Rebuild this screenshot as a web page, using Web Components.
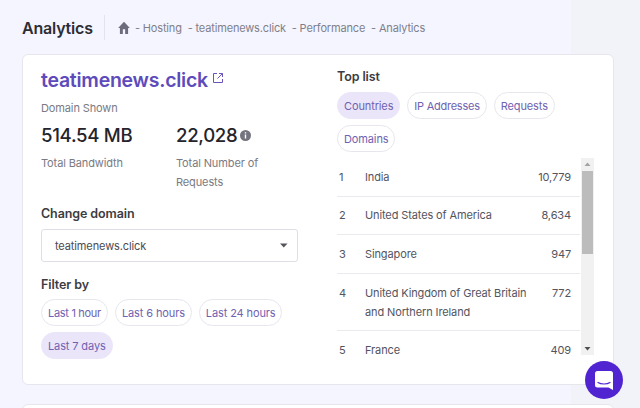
<!DOCTYPE html>
<html><head><meta charset="utf-8">
<style>
html,body{margin:0;padding:0;height:408px;overflow:hidden}
body{font-family:Inter,"Liberation Sans",sans-serif;color:#2d2d33}
</style></head><body>
<template id="t-chip"><style>
:host{display:inline-flex;align-items:center;height:27px;box-sizing:border-box;padding:0 6px;border:1px solid #e6e6ee;border-radius:14px;font-size:11px;letter-spacing:-.12px;color:#6f62b0;background:#fff;white-space:nowrap}
:host([active]){background:#ebe5fa;border-color:#ebe5fa}
</style><slot></slot></template>

<template id="t-row"><style>
:host{display:grid;grid-template-columns:26px 1fr auto;padding:9.800px 9px 8.800px 2px;font-size:11px;line-height:19px;letter-spacing:-.12px;color:#54545e;border-bottom:1px solid #e9e9ee}
:host(:last-child){border-bottom:0;padding-bottom:0}
.n{padding-right:8px}
.v{padding-left:14px}
</style><span><slot name="rank"></slot></span><span class="n"><slot name="name"></slot></span><span class="v"><slot name="value"></slot></span></template>

<template id="t-list"><style>
:host{display:flex;align-items:flex-start;height:197px}
.rows{flex:1;min-width:0}
.bar{width:13px;height:197px;margin-left:1px;background:#f1f1f1;display:flex;flex-direction:column;align-items:center}
.bar svg{display:block;flex:none}
.thumb{width:11px;height:83px;background:#bcbcbc;flex:none}
.sp{flex:1}
</style><div class="rows"><slot></slot></div><div class="bar"><svg width="13" height="13" viewBox="0 0 13 13"><path d="M6.500 4.500 9.500 8h-6z" fill="#a3a3a3"/></svg><div class="thumb"></div><div class="sp"></div><svg width="13" height="13" viewBox="0 0 13 13"><path d="M3.500 5h6l-3 3.500z" fill="#505050"/></svg></div></template>

<template id="t-stat"><style>
:host{display:block}
.v{display:flex;align-items:center;font-size:18.600px;font-weight:500;line-height:24px;letter-spacing:-.3px;color:#24242a}
.l{margin-top:7px;font-size:11px;line-height:19px;letter-spacing:-.12px;color:#7a7a83}
</style><div class="v"><slot name="value"></slot></div><div class="l"><slot name="label"></slot></div></template>

<template id="t-select"><style>
:host{display:flex;align-items:center;justify-content:space-between;height:33px;box-sizing:border-box;padding:0 9px 0 13px;border:1px solid #dedee6;border-radius:3px;font-size:11px;letter-spacing:-.12px;color:#4a4a52;background:#fff}
svg{display:block}
</style><span><slot></slot></span><svg width="8" height="5" viewBox="0 0 8 5"><path d="M0 .5h7.500L3.800 4.500z" fill="#55555c"/></svg></template>

<template id="t-head"><style>
:host{display:flex;align-items:center;height:54px;box-sizing:border-box;padding:1px 0 0 22px}
h1{margin:0;font-size:16px;font-weight:600;letter-spacing:-.2px;color:#2d2d33;width:82px}
.d{width:1px;height:25px;background:#e3e3ec;margin-right:12px}
nav{display:flex;align-items:center;font-size:11px;letter-spacing:-.16px;color:#7f7f8b;white-space:pre}
svg{display:block;margin-right:4px}
</style><h1><slot name="title"></slot></h1><div class="d"></div><nav><svg width="14" height="13" viewBox="0 0 24 22"><path d="M10 22v-8h4v8h5v-10h3L12 1 2 12h3v10z" fill="#6c6c7d"/></svg><slot></slot></nav></template>

<template id="t-card"><style>
:host{display:grid;grid-template-columns:296px 1fr;width:592px;height:331px;box-sizing:border-box;margin-left:22px;padding:14px 19px 0 18px;border:1px solid #e6e6ec;border-radius:6px;background:#fff}
</style><slot></slot></template>

<template id="t-app"><style>
:host{display:block;position:relative;width:640px;height:408px;overflow:hidden;background:linear-gradient(to right,#f4f5ff 571px,#f2f3f8 571px)}
.next{width:592px;height:40px;box-sizing:border-box;margin:19px 0 0 22px;border:1px solid #e6e6ec;border-radius:6px;background:#fff}
.chat{position:absolute;left:585px;top:361px;width:38px;height:38px;border-radius:50%;background:#5025d1;display:flex;align-items:center;justify-content:center}
svg{display:block}
</style><slot name="head"></slot><slot name="card"></slot><div class="next"></div><div class="chat"><svg width="18" height="19" viewBox="0 0 18 19"><path d="M2.500 0h13A2.500 2.500 0 0 1 18 2.500V19l-4.500-2.500h-11A2.500 2.500 0 0 1 0 14V2.500A2.500 2.500 0 0 1 2.500 0z" fill="#fff"/><path d="M3 11.500c3 2 9 2 12 0" fill="none" stroke="#5025d1" stroke-width="1.200" stroke-linecap="round"/></svg></div></template>

<template id="t-left"><style>
:host{display:block;width:257px}
.dom{display:flex;align-items:flex-start;gap:4px;font-size:19.500px;font-weight:600;line-height:22px;letter-spacing:-.25px;color:#5e4bbb}
.dom svg{display:block;margin-top:3px}
.sub{margin-top:9px;font-size:11px;line-height:16px;letter-spacing:-.12px;color:#7a7a83}
.stats{display:grid;grid-template-columns:135px 1fr;margin-top:7px}
h3{margin:0;font-size:12.500px;font-weight:600;line-height:16px;letter-spacing:-.1px;color:#3c3c42}
.cd{margin-top:14px}
.sel{margin-top:7px}
.fb{margin-top:15px}
.chips{display:flex;flex-wrap:wrap;gap:6px 7px;margin-top:6px}
</style><div class="dom"><slot name="domain"></slot><svg width="12" height="12" viewBox="0 0 12 12" fill="none" stroke="#6a55bd" stroke-width="1"><path d="M5 1.500H1.500v9h9V7M7 1.500h3.500V5M10.500 1.500 5.500 6.500"/></svg></div><div class="sub"><slot name="sub"></slot></div><div class="stats"><slot name="stats"></slot></div><h3 class="cd"><slot name="cd"></slot></h3><div class="sel"><slot name="sel"></slot></div><h3 class="fb"><slot name="fb"></slot></h3><div class="chips"><slot name="chips"></slot></div></template>

<template id="t-right"><style>
:host{display:block}
h3{margin:0;font-size:12.500px;font-weight:600;line-height:16px;letter-spacing:-.1px;color:#3c3c42}
.chips{display:flex;flex-wrap:wrap;gap:6px 7px;margin-top:7px}
.list{margin-top:6px}
</style><h3><slot name="title"></slot></h3><div class="chips"><slot name="chips"></slot></div><div class="list"><slot name="list"></slot></div></template>

<script>
for (const n of ['chip','row','list','stat','select','head','card','app','left','right']) {
  customElements.define('x-'+n, class extends HTMLElement {
    constructor(){ super(); this.attachShadow({mode:'open'}).appendChild(document.getElementById('t-'+n).content.cloneNode(true)); }
  });
}
</script>

<x-app>
  <x-head slot="head"><span slot="title">Analytics</span>- Hosting  - teatimenews.click  - Performance  - Analytics</x-head>
  <x-card slot="card">
    <x-left>
      <span slot="domain">teatimenews.click</span>
      <span slot="sub">Domain Shown</span>
      <x-stat slot="stats"><span slot="value">514.54 MB</span><span slot="label">Total Bandwidth</span></x-stat>
      <x-stat slot="stats"><span slot="value" style="display:inline-flex;align-items:center">22,028<svg width="11" height="11" viewBox="0 0 11 11" style="display:block;margin-left:3px"><circle cx="5.500" cy="5.500" r="5.500" fill="#74747f"/><path d="M4.800 4.600h1.400v4H4.800zM4.800 2.300h1.400v1.300H4.800z" fill="#fff"/></svg></span><span slot="label">Total Number of Requests</span></x-stat>
      <span slot="cd">Change domain</span>
      <x-select slot="sel">teatimenews.click</x-select>
      <span slot="fb">Filter by</span>
      <x-chip slot="chips" style="letter-spacing:-.3px">Last 1 hour</x-chip><x-chip slot="chips">Last 6 hours</x-chip><x-chip slot="chips">Last 24 hours</x-chip><x-chip slot="chips" active>Last 7 days</x-chip>
    </x-left>
    <x-right>
      <span slot="title">Top list</span>
      <x-chip slot="chips" active>Countries</x-chip><x-chip slot="chips" style="letter-spacing:-.25px">IP Addresses</x-chip><x-chip slot="chips">Requests</x-chip><x-chip slot="chips">Domains</x-chip>
      <x-list slot="list">
        <x-row><span slot="rank">1</span><span slot="name">India</span><span slot="value">10,779</span></x-row>
        <x-row><span slot="rank">2</span><span slot="name">United States of America</span><span slot="value">8,634</span></x-row>
        <x-row><span slot="rank">3</span><span slot="name">Singapore</span><span slot="value">947</span></x-row>
        <x-row><span slot="rank">4</span><span slot="name">United Kingdom of Great Britain and Northern Ireland</span><span slot="value">772</span></x-row>
        <x-row><span slot="rank">5</span><span slot="name">France</span><span slot="value">409</span></x-row>
      </x-list>
    </x-right>
  </x-card>
</x-app>
</body></html>
